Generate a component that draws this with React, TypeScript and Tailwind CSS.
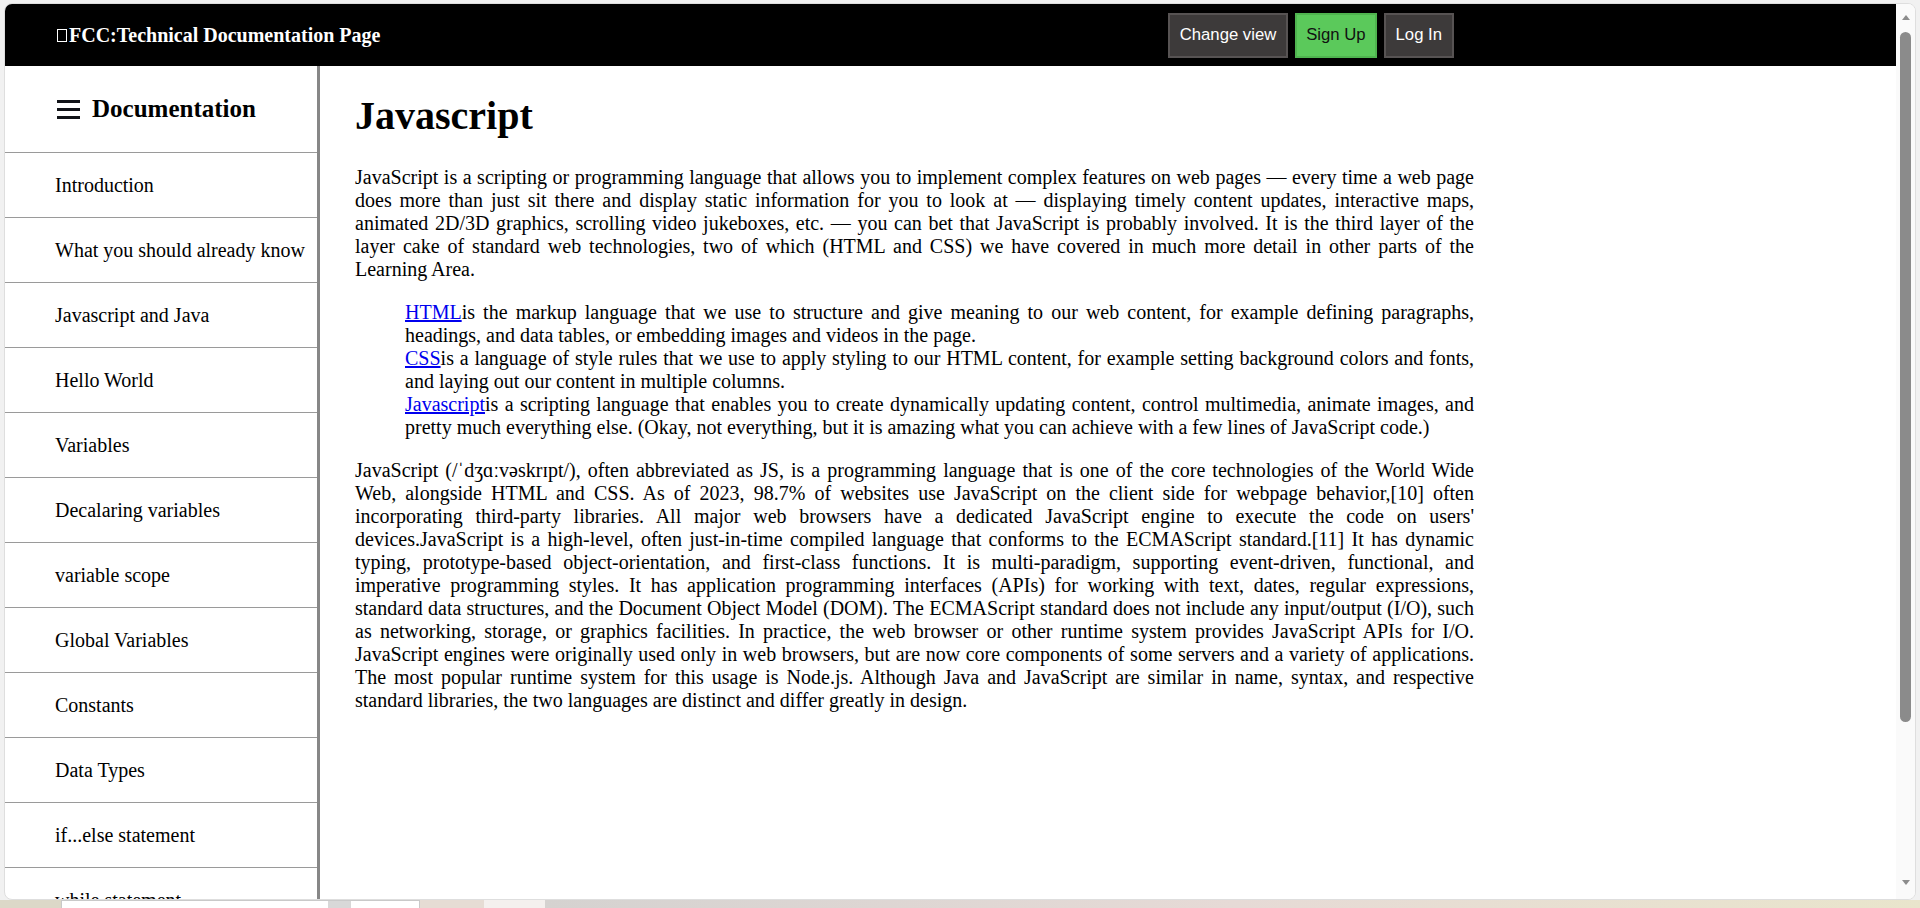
const NAV = [
  "Introduction",
  "What you should already know",
  "Javascript and Java",
  "Hello World",
  "Variables",
  "Decalaring variables",
  "variable scope",
  "Global Variables",
  "Constants",
  "Data Types",
  "if...else statement",
  "while statement",
  "Function declarations",
  "Reference",
];

const TOPICS = [
  {
    link: "HTML",
    text: "is the markup language that we use to structure and give meaning to our web content, for example defining paragraphs, headings, and data tables, or embedding images and videos in the page.",
  },
  {
    link: "CSS",
    text: "is a language of style rules that we use to apply styling to our HTML content, for example setting background colors and fonts, and laying out our content in multiple columns.",
  },
  {
    link: "Javascript",
    text: "is a scripting language that enables you to create dynamically updating content, control multimedia, animate images, and pretty much everything else. (Okay, not everything, but it is amazing what you can achieve with a few lines of JavaScript code.)",
  },
];

function Hamburger() {
  return (
    <svg width="23" height="19" viewBox="0 0 23 19" aria-hidden="true">
      <rect x="0" y="0" width="23" height="3" fill="#111318" />
      <rect x="0" y="8" width="23" height="3" fill="#111318" />
      <rect x="0" y="16" width="23" height="3" fill="#111318" />
    </svg>
  );
}

function Header() {
  return (
    <header className="h-[62px] shrink-0 bg-black flex items-center justify-between pl-[52px] pr-[442px]">
      <div className="flex items-center text-white text-[20px] font-bold">
        <span className="inline-block w-[10px] h-[13px] border border-white mr-[2px]" />
        FCC:Technical Documentation Page
      </div>
      <div className="flex items-center gap-[7px] font-['Liberation_Sans',Arial,sans-serif] text-[16.7px]">
        <button className="h-[45px] px-[10px] border-2 border-[#575353] bg-[#3d3a3a] text-white">
          Change view
        </button>
        <button className="h-[45px] px-[9px] border-2 border-[#4fb44f] bg-[#5bc95b] text-[#111]">
          Sign Up
        </button>
        <button className="h-[45px] px-[10px] border-2 border-[#575353] bg-[#3d3a3a] text-white">
          Log In
        </button>
      </div>
    </header>
  );
}

function Sidebar() {
  return (
    <nav className="w-[315px] shrink-0 border-r-[3px] border-[#878787] overflow-hidden">
      <div className="h-[87px] border-b border-[#9a9a9a] flex items-center pl-[52px] gap-[12px]">
        <Hamburger />
        <span className="text-[25px] font-bold text-black">Documentation</span>
      </div>
      {NAV.map((item) => (
        <a
          key={item}
          href="#"
          className="h-[65px] border-b border-[#9a9a9a] flex items-center pl-[50px] text-[20px] text-black"
        >
          {item}
        </a>
      ))}
    </nav>
  );
}

function Content() {
  return (
    <main className="flex-1 pl-[35px] overflow-hidden">
      <div className="w-[1119px] text-[20px] leading-[23px] text-black text-justify">
        <h1 className="text-[40px] leading-[46px] font-bold my-[26.8px] text-left">Javascript</h1>
        <p className="my-[20px]">
          JavaScript is a scripting or programming language that allows you to implement complex features on web
          pages — every time a web page does more than just sit there and display static information for you to look
          at — displaying timely content updates, interactive maps, animated 2D/3D graphics, scrolling video
          jukeboxes, etc. — you can bet that JavaScript is probably involved. It is the third layer of the layer cake
          of standard web technologies, two of which (HTML and CSS) we have covered in much more detail in other parts
          of the Learning Area.
        </p>
        <ul className="my-[20px] pl-[50px] list-none">
          {TOPICS.map((t) => (
            <li key={t.link}>
              <a href="#" className="text-[#0000ee] underline">
                {t.link}
              </a>
              {t.text}
            </li>
          ))}
        </ul>
        <p className="my-[20px]">
          JavaScript (/ˈdʒɑːvəskrɪpt/), often abbreviated as JS, is a programming language that is one of the core
          technologies of the World Wide Web, alongside HTML and CSS. As of 2023, 98.7% of websites use JavaScript on
          the client side for webpage behavior,[10] often incorporating third-party libraries. All major web browsers
          have a dedicated JavaScript engine to execute the code on users' devices.JavaScript is a high-level, often
          just-in-time compiled language that conforms to the ECMAScript standard.[11] It has dynamic typing,
          prototype-based object-orientation, and first-class functions. It is multi-paradigm, supporting
          event-driven, functional, and imperative programming styles. It has application programming interfaces
          (APIs) for working with text, dates, regular expressions, standard data structures, and the Document Object
          Model (DOM). The ECMAScript standard does not include any input/output (I/O), such as networking, storage,
          or graphics facilities. In practice, the web browser or other runtime system provides JavaScript APIs for
          I/O. JavaScript engines were originally used only in web browsers, but are now core components of some
          servers and a variety of applications. The most popular runtime system for this usage is Node.js. Although
          Java and JavaScript are similar in name, syntax, and respective standard libraries, the two languages are
          distinct and differ greatly in design.
        </p>
      </div>
    </main>
  );
}

function Scrollbar() {
  return (
    <div className="w-[19px] shrink-0 bg-[#fafafa] flex flex-col items-center pt-[11px] pb-[14px]">
      <div className="w-0 h-0 border-x-[4px] border-x-transparent border-b-[5px] border-b-[#8c8c8c]" />
      <div className="mt-[12px] w-[11px] h-[690px] rounded-full bg-[#8b8b8b]" />
      <div className="flex-1" />
      <div className="w-0 h-0 border-x-[4px] border-x-transparent border-t-[5px] border-t-[#8c8c8c]" />
    </div>
  );
}

export default function App() {
  return (
    <div className="w-[1920px] h-[908px] overflow-hidden bg-[#f1f1f1] flex flex-col font-['Liberation_Serif','Times_New_Roman',serif]">
      <div className="h-[900px] pt-[3px] pl-[4px] pr-[4px]">
        <div className="h-[897px] rounded-[8px] border border-[#dedede] overflow-hidden bg-white flex">
          <div className="flex-1 flex flex-col min-w-0">
            <Header />
            <div className="flex-1 flex min-h-0">
              <Sidebar />
              <Content />
            </div>
          </div>
          <Scrollbar />
        </div>
      </div>
      {/* desktop strip peeking under the window */}
      <div className="h-[8px] flex">
        <div className="w-[61px] bg-[#dcd8c8]" />
        <div className="w-[359px] bg-white border-t border-x border-[#c9c9c9] flex justify-end pr-[68px]">
          <div className="w-[23px] h-full bg-[#d8d8d8]" />
        </div>
        <div className="w-[64px] bg-[#e6dcd4]" />
        <div className="w-[61px] bg-[#f4f0ee]" />
        <div className="flex-1 bg-linear-to-r from-[#d5d2d0] via-[#e6dad6] to-[#e9e5cc]" />
      </div>
    </div>
  );
}
